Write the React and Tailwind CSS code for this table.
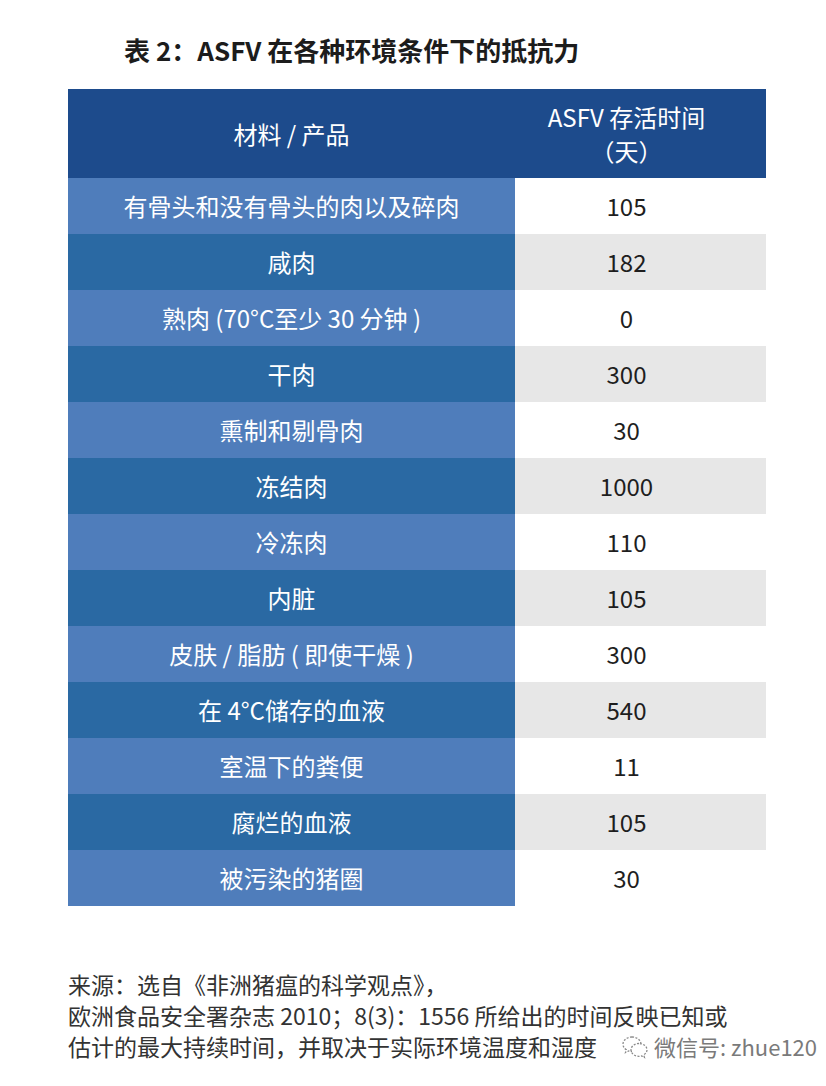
import React from "react";

const rows = [
  ["有骨头和没有骨头的肉以及碎肉", "105"],
  ["咸肉", "182"],
  ["熟肉 (70°C至少 30 分钟 )", "0"],
  ["干肉", "300"],
  ["熏制和剔骨肉", "30"],
  ["冻结肉", "1000"],
  ["冷冻肉", "110"],
  ["内脏", "105"],
  ["皮肤 / 脂肪 ( 即使干燥 )", "300"],
  ["在 4°C储存的血液", "540"],
  ["室温下的粪便", "11"],
  ["腐烂的血液", "105"],
  ["被污染的猪圈", "30"],
];

const font = { fontFamily: '"Noto Sans CJK SC", "Noto Sans", sans-serif' };

function WeChatIcon() {
  return (
    <svg width="28" height="26" viewBox="0 0 28 26" fill="none" stroke="#8a8a8a" strokeWidth="1.3" strokeDasharray="2 1.5">
      <path d="M11 3C6 3 2 6.2 2 10.2c0 2.3 1.3 4.3 3.3 5.6L4.5 18.5l3.2-1.6c1 .3 2.1.5 3.3.5" />
      <path d="M11 3c4.6 0 8.4 2.8 8.9 6.4" />
      <path d="M18 9.5c-4.4 0-8 2.9-8 6.4s3.6 6.4 8 6.4c.9 0 1.8-.1 2.6-.4l2.8 1.5-.7-2.5c1.9-1.2 3.3-3 3.3-5 0-3.5-3.6-6.4-8-6.4z" />
    </svg>
  );
}

export default function App() {
  return (
    <div className="w-[826px] h-[1086px] bg-white overflow-hidden relative" style={font}>
      <div className="pt-[31px] pl-[124px] text-[26px] leading-[38px] font-bold text-[#1c1c1c]">
        表 2：ASFV 在各种环境条件下的抵抗力
      </div>
      <div className="mt-[20px] ml-[68px] w-[698px]">
        <div className="flex h-[89px] bg-[#1d4b8c] text-white text-[24px]">
          <div className="w-[447px] flex items-center justify-center">材料 / 产品</div>
          <div className="flex-1 flex flex-col items-center justify-center leading-[34px] pr-[28px]">
            <span>ASFV 存活时间</span>
            <span>（天）</span>
          </div>
        </div>
        {rows.map(([a, b], i) => (
          <div key={i} className="flex h-[56px] text-[24px]">
            <div
              className={
                i % 2 === 0
                  ? "w-[447px] flex items-center justify-center bg-[#4f7dbb] text-white"
                  : "w-[447px] flex items-center justify-center bg-[#2a69a3] text-white"
              }
            >
              {a}
            </div>
            <div
              className={
                i % 2 === 0
                  ? "flex-1 flex items-center justify-center pr-[28px] bg-white text-[#1e1e1e]"
                  : "flex-1 flex items-center justify-center pr-[28px] bg-[#e7e7e7] text-[#1e1e1e]"
              }
            >
              {b}
            </div>
          </div>
        ))}
      </div>
      <div className="mt-[63px] ml-[68px] text-[23px] leading-[31px] text-[#333]">
        <div>来源：选自《非洲猪瘟的科学观点》，</div>
        <div>欧洲食品安全署杂志 2010；8(3)：1556 所给出的时间反映已知或</div>
        <div className="flex items-center">
          <span>估计的最大持续时间，并取决于实际环境温度和湿度</span>
          <span className="ml-[24px] flex items-center gap-[5px] text-[22px] text-[#7a7a7a]">
            <WeChatIcon />
            <span>微信号: zhue120</span>
          </span>
        </div>
      </div>
    </div>
  );
}
